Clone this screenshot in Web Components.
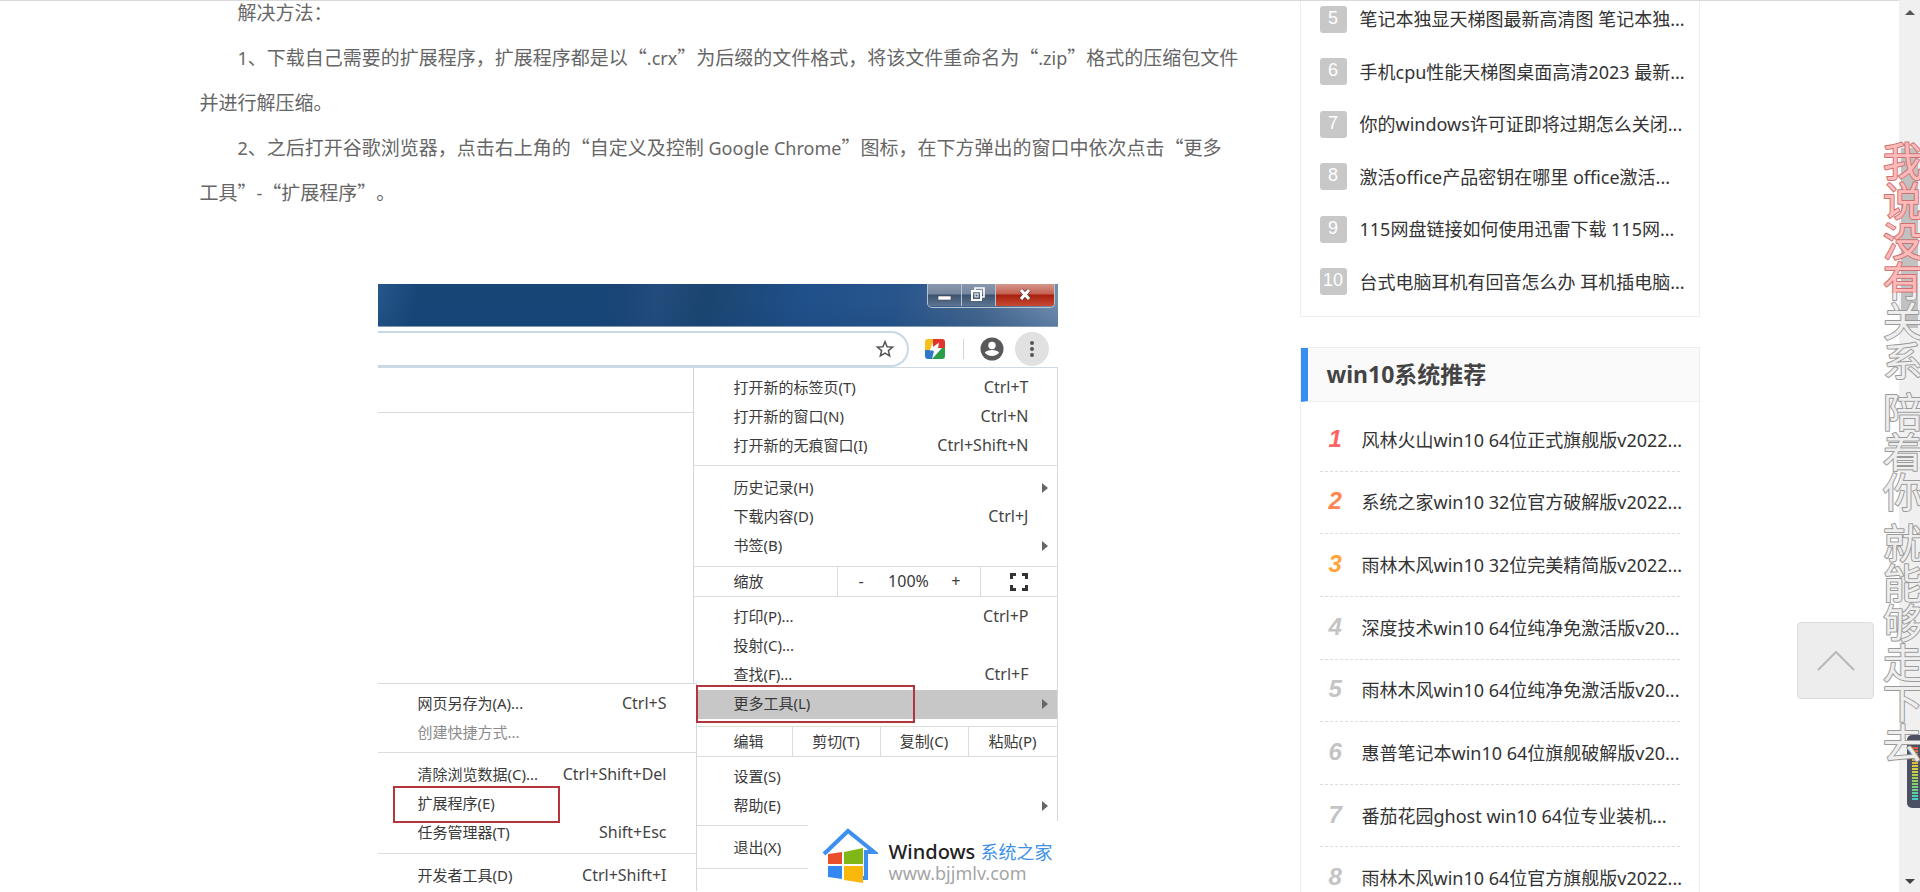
<!DOCTYPE html>
<html lang="zh-CN">
<head>
<meta charset="utf-8">
<title>win10系统推荐</title>
<style>
html,body{margin:0;height:100%}
body{overflow:hidden;background:#fff;color:#333;font-family:"Noto Sans","Noto Sans CJK SC",sans-serif}
</style>
</head>
<body>
<app-shell>
  <article-body></article-body>
  <side-bar slot="side"></side-bar>
</app-shell>
<script>
const define=(name,html)=>{
  const t=document.createElement('template');
  t.innerHTML=html;
  customElements.define(name,class extends HTMLElement{
    constructor(){super();this.attachShadow({mode:'open'}).append(t.content.cloneNode(true));}
    connectedCallback(){
      this.shadowRoot.querySelectorAll('[data-attr]').forEach(n=>{n.textContent=this.getAttribute(n.dataset.attr)||'';});
    }
  });
};

define('menu-row',`<style>
:host{display:block}
button{all:unset;box-sizing:border-box;display:flex;align-items:center;width:100%;height:29px;padding-left:40px;padding-right:var(--key-gap,28px);padding-bottom:2px;font-size:15px;line-height:27px;color:#3a3a3a;white-space:nowrap;position:relative}
.key{margin-left:auto;font-size:16px;color:#444}
i{display:none;position:absolute;right:9px;top:9px;border:5px solid transparent;border-left:6px solid #666;border-right:0}
:host([arrow]) i{display:block}
:host([off]) button{color:#8b8b8b}
:host([active]) button{background:#c7c7c7}
</style><button type="button"><span data-attr="label"></span><span class="key" data-attr="key"></span><i></i></button>`);

define('menu-group',`<style>
:host{display:block;padding:8px 0 5px;border-bottom:1px solid #dcdcdc}
:host([tight]){padding:6px 0 4px}
:host([open]){padding-bottom:0;border-bottom:0}
</style><slot></slot>`);

define('window-titlebar',`<style>
:host{display:flex;justify-content:flex-end;align-items:flex-start;height:42px;border-bottom:1px solid #8299b5;
background:linear-gradient(to bottom,transparent 40%,rgba(20,66,116,.25)),linear-gradient(100deg,#25578a 0,#174576 6%,#174576 32%,#1b4577 36%,#234c7d 41%,#1b446f 48%,#20508a 62%,#28558c 76%,#46688f 88%,#7590b2 100%)}
div{display:flex;height:23px;margin-right:3px;border:1px solid #b9c4d2;border-top:0;border-radius:0 0 5px 5px;overflow:hidden}
button{all:unset;display:grid;place-items:center;box-sizing:border-box;width:34px;height:22px;background:linear-gradient(#8a98ad,#75869f 45%,#3c536f 50%,#5d7592);border-right:1px solid #b9c4d2}
button:last-child{width:58px;border:0;background:linear-gradient(#d4978b,#c4604f 45%,#a8200f 50%,#c74a32)}
</style><div>
<button type="button" aria-label="最小化"><svg width="16" height="16"><rect x="2" y="9" width="13" height="4" fill="#fff" stroke="#445" stroke-width=".6"/></svg></button>
<button type="button" aria-label="还原"><svg width="16" height="16" fill="none" stroke="#fff" stroke-width="1.6"><path d="M5 3V1h9v9h-2"/><rect x="2" y="4" width="9" height="9" stroke-width="2"/><rect x="5" y="7" width="3" height="3" stroke-width="1"/></svg></button>
<button type="button" aria-label="关闭"><svg width="18" height="16"><path d="M5 3l8 9M13 3l-8 9" stroke="#633" stroke-width="4.600"/><path d="M5 3l8 9M13 3l-8 9" stroke="#fff" stroke-width="3.200"/></svg></button>
</div>`);

define('browser-toolbar',`<style>
:host{display:flex;align-items:center;box-sizing:border-box;height:41px;padding-top:4px;background:#fff;border-bottom:1px solid #cfd9e0}
.omni{flex:1;height:32px;border:2px solid #c8d9e6;border-left:0;border-radius:0 18px 18px 0;display:flex;align-items:center;justify-content:flex-end;padding-right:12px}
.ext{margin-left:16px}.bar{width:1px;height:20px;background:#d5d5d5;margin-left:18px}
.me{margin-left:16px}.more{margin-left:11px;margin-right:9px}
svg{display:block}
</style><div class="omni"><svg width="20" height="20" viewBox="0 0 20 20"><path d="M10 2.600l2.100 5.100 5.500.4-4.200 3.500 1.300 5.400-4.700-2.900L5.300 17l1.300-5.400L2.400 8.100l5.500-.4z" fill="none" stroke="#555" stroke-width="1.500"/></svg></div>
<svg class="ext" width="20" height="20" viewBox="0 0 20 20"><clipPath id="c"><rect width="20" height="20" rx="3"/></clipPath><g clip-path="url(#c)"><rect width="20" height="20" fill="#fff"/><path d="M0 0H9L5 11H0z" fill="#f5c01c"/><path d="M8 0H20V9H13L14 4L8 8z" fill="#e0342c"/><path d="M0 11H8L9 13L7 20H0z" fill="#2f77c9"/><path d="M20 9V20H7L17 9z" fill="#2a9e4a"/><path d="M14 3.500L4.500 11.500h5L7.500 17.500 16.500 9h-5z" fill="#fff"/></g></svg>
<span class="bar"></span>
<svg class="me" width="24" height="24" viewBox="0 0 24 24"><circle cx="12" cy="12" r="11.500" fill="#58595b"/><circle cx="12" cy="8.500" r="3.700" fill="#fff"/><path d="M4.800 15.600c2.400-3.400 12-3.400 14.400 0-3 4.600-11.400 4.600-14.400 0z" fill="#fff"/></svg>
<svg class="more" width="34" height="34" viewBox="0 0 34 34"><circle cx="17" cy="17" r="17" fill="#e1e1e1"/><g fill="#555"><circle cx="17" cy="11" r="2"/><circle cx="17" cy="17" r="2"/><circle cx="17" cy="23" r="2"/></g></svg>`);

define('site-logo',`<style>
:host{display:flex;align-items:center;box-sizing:border-box;width:250px;height:70px;padding-left:14px;gap:11px;background:#fff}
div{padding-top:12px}
b{display:block;font-weight:500;font-size:20px;line-height:22px;color:#222;white-space:nowrap}
b span{color:#3d8fe8;font-weight:400;font-size:18px}
small{display:block;font-size:18px;line-height:20px;color:#a5a5a5}
</style><svg width="56" height="56" viewBox="0 0 56 56"><path d="M2 26L26 3l26 21H44V50H37" fill="none" stroke="#3d8ff0" stroke-width="4"/><path d="M6 26l14-2v12H6z" fill="#e8502c"/><path d="M22 24l19-4v16H22z" fill="#7fb816"/><path d="M6 38h14v13L6 49z" fill="#3489f0"/><path d="M22 38h19v17l-19-3z" fill="#fab80c"/></svg>
<div><b>Windows <span>系统之家</span></b><small>www.bjjmlv.com</small></div>`);

define('chrome-shot',`<style>
:host{display:block;position:relative;width:680px;background:#fff;overflow:hidden}
.under{display:grid;grid-template-columns:minmax(0,316px) minmax(0,1fr)}
.left{display:flex;flex-direction:column;border-right:1px solid #d5d5d9}
.strip{height:44px;border-bottom:1px solid #d9d9d9}
.blank{flex:1;min-height:270px}
.sub{border-top:1px solid #d9d9d9;border-right:1px solid #d9d9d9;background:#fff;margin-right:-4px;z-index:1;--key-gap:29px}
.menu{border-right:1px solid #d9d9d9}
.cells{display:grid;grid-template-columns:144px 143px 1fr;height:29px;border-bottom:1px solid #dcdcdc;font-size:15px;line-height:29px;color:#3a3a3a}
.cells.edit{grid-template-columns:99px 88px 88px 1fr;border-top:1px solid #dcdcdc;margin-top:7px}
.cells>*{border-right:1px solid #dcdcdc;display:flex;align-items:center;justify-content:center}
.cells>:first-child{justify-content:flex-start;padding-left:40px}
.cells>:last-child{border:0}
.zoom{gap:22px;font-size:16px}
button{all:unset}
.zoom button{width:10px;text-align:center}
.mark{position:absolute;box-sizing:border-box;border:2px solid #b2343c;z-index:2}
.m1{left:15px;top:502px;width:167px;height:37px}
.m2{left:318px;top:401px;width:219px;height:38px}
site-logo{position:absolute;right:0;bottom:0}
</style>
<window-titlebar></window-titlebar><browser-toolbar></browser-toolbar>
<div class="under">
<div class="left"><div class="strip"></div><div class="blank"></div>
<div class="sub">
<menu-group tight><menu-row label="网页另存为(A)..." key="Ctrl+S"></menu-row><menu-row off label="创建快捷方式..."></menu-row></menu-group>
<menu-group><menu-row label="清除浏览数据(C)..." key="Ctrl+Shift+Del"></menu-row><menu-row label="扩展程序(E)"></menu-row><menu-row label="任务管理器(T)" key="Shift+Esc"></menu-row></menu-group>
<menu-group open><menu-row label="开发者工具(D)" key="Ctrl+Shift+I"></menu-row></menu-group>
</div></div>
<div class="menu">
<menu-group tight><menu-row label="打开新的标签页(T)" key="Ctrl+T"></menu-row><menu-row label="打开新的窗口(N)" key="Ctrl+N"></menu-row><menu-row label="打开新的无痕窗口(I)" key="Ctrl+Shift+N"></menu-row></menu-group>
<menu-group><menu-row arrow label="历史记录(H)"></menu-row><menu-row label="下载内容(D)" key="Ctrl+J"></menu-row><menu-row arrow label="书签(B)"></menu-row></menu-group>
<div class="cells"><span>缩放</span><span class="zoom"><button type="button">-</button><span>100%</span><button type="button">+</button></span><button type="button" aria-label="全屏"><svg width="18" height="18" fill="none" stroke="#333" stroke-width="3"><path d="M1.500 6V1.500H6M12 1.500h4.500V6M16.500 12v4.500H12M6 16.500H1.500V12"/></svg></button></div>
<menu-group tight open><menu-row label="打印(P)..." key="Ctrl+P"></menu-row><menu-row label="投射(C)..."></menu-row><menu-row label="查找(F)..." key="Ctrl+F"></menu-row><menu-row active arrow label="更多工具(L)"></menu-row></menu-group>
<div class="cells edit"><span>编辑</span><button type="button">剪切(T)</button><button type="button">复制(C)</button><button type="button">粘贴(P)</button></div>
<menu-group tight><menu-row label="设置(S)"></menu-row><menu-row arrow label="帮助(E)"></menu-row></menu-group>
<menu-group><menu-row label="退出(X)"></menu-row></menu-group>
</div></div>
<span class="mark m1"></span><span class="mark m2"></span>
<site-logo></site-logo>`);

define('article-body',`<style>
:host{display:block;font-family:"Noto Sans CJK SC",sans-serif;font-size:19px;line-height:45px;color:#666;text-spacing-trim:space-all}
p{margin:0;text-indent:38px}
.en{font-family:"Noto Sans",sans-serif;font-size:18px;line-height:1}
.keep{white-space:nowrap}
figure{margin:70px 6px 0 0;display:flex;justify-content:center;font-family:"Noto Sans","Noto Sans CJK SC",sans-serif;line-height:29px}
</style>
<p>解决方法：</p>
<p><span class="en">1</span>、下载自己需要的扩展程序，扩展程序都是以“<span class="en">.crx</span>”为后缀的文件格式，将该文件重命名为“<span class="en">.zip</span>”格式的压缩包文件并进行解压缩。</p>
<p><span class="en">2</span>、之后打开谷歌浏览器，点击右上角的“自定义及控制<span class="en"> Google Chrome</span>”图标，在下方弹出的窗口中依次点击“更多<span class="keep">工具”</span><span class="en">-</span>“扩展程序”。</p>
<figure><chrome-shot></chrome-shot></figure>`);

define('hot-item',`<style>
:host{display:flex;align-items:center;gap:13px;font-size:18px;white-space:nowrap}
span{flex:none;width:27px;height:27px;border-radius:3px;background:#c8c8c8;color:#fff;text-align:center;font:18px/24px "Liberation Sans",sans-serif}
a{color:#333;text-decoration:none;padding-bottom:2px}
</style><span data-attr="rank"></span><a href="#"><slot></slot></a>`);

define('rank-item',`<style>
:host{display:flex;align-items:center;font-size:18px;white-space:nowrap;border-bottom:1px dashed #ddd;--c:#c4c4c4}
:host([rank="1"]){--c:#ff6464}:host([rank="2"]){--c:#ff8650}:host([rank="3"]){--c:#ffa53c}
span{flex:none;width:33px;padding-left:9px;color:var(--c);font:italic bold 24px/24px "Liberation Sans",sans-serif}
a{color:#333;text-decoration:none}
a,span{padding-bottom:2px}
</style><span data-attr="rank"></span><a href="#"><slot></slot></a>`);

define('side-bar',`<style>
:host{display:block}
section{border:1px solid #eee}
.hot{padding:3px 19px 8px}
.list{display:grid;grid-template-columns:minmax(0,1fr);grid-auto-rows:1fr}
.hot .list{min-height:315px}
.win{margin-top:30px}
.win .list{min-height:501px;padding:7px 19px 0}
h2{margin:0;padding-left:19px;border-left:7px solid #368ff0;border-bottom:1px solid #eee;background:#fafafa;color:#444;font-size:23px;line-height:53px}
</style>
<section class="hot"><div class="list">
<hot-item rank="5">笔记本独显天梯图最新高清图 笔记本独...</hot-item>
<hot-item rank="6">手机cpu性能天梯图桌面高清2023 最新...</hot-item>
<hot-item rank="7">你的windows许可证即将过期怎么关闭...</hot-item>
<hot-item rank="8">激活office产品密钥在哪里 office激活...</hot-item>
<hot-item rank="9">115网盘链接如何使用迅雷下载 115网...</hot-item>
<hot-item rank="10">台式电脑耳机有回音怎么办 耳机插电脑...</hot-item>
</div></section>
<section class="win"><h2>win10系统推荐</h2><div class="list">
<rank-item rank="1">风林火山win10 64位正式旗舰版v2022...</rank-item>
<rank-item rank="2">系统之家win10 32位官方破解版v2022...</rank-item>
<rank-item rank="3">雨林木风win10 32位完美精简版v2022...</rank-item>
<rank-item rank="4">深度技术win10 64位纯净免激活版v20...</rank-item>
<rank-item rank="5">雨林木风win10 64位纯净免激活版v20...</rank-item>
<rank-item rank="6">惠普笔记本win10 64位旗舰破解版v20...</rank-item>
<rank-item rank="7">番茄花园ghost win10 64位专业装机...</rank-item>
<rank-item rank="8">雨林木风win10 64位官方旗舰版v2022...</rank-item>
</div></section>`);

define('page-scrollbar',`<style>
:host{display:flex;flex-direction:column;justify-content:space-between;align-items:center;box-sizing:border-box;width:21px;padding:10px 0 8px;background:#f0f0f0;position:relative}
svg{display:block}
i{position:absolute;left:2px;top:148px;width:17px;height:180px;background:#c1c1c1}
</style><svg width="10" height="5"><path d="M0 5L5 0l5 5z" fill="#555"/></svg><i></i><svg width="10" height="5"><path d="M0 0h10L5 5z" fill="#444"/></svg>`);

define('level-meter',`<style>
:host{position:absolute;right:0;top:735px;width:13px;height:73px;border-radius:5px 0 0 5px;background:#4b5162}
i{position:absolute;left:5px;top:12px;width:6px;height:53px;background:repeating-linear-gradient(transparent 0 2px,#4b5162 2px 3px),linear-gradient(#f0503c,#e0a83c 22%,#d8d040 42%,#8fd060 65%,#3fd0c8)}
</style><i></i>`);

/* Karaoke strip: the sung part is pink, the rest grey. */
customElements.define('lyric-strip',class extends HTMLElement{
  constructor(){
    super();
    let y=44,out='';
    for(const ch of '我说没有关系 陪着你 就能够走下去'){
      if(ch===' '){y+=11;continue;}
      out+=`<text x="6" y="${y}">${ch}</text>`;
      y+=40;
    }
    this.attachShadow({mode:'open'}).innerHTML=`<style>
:host{position:absolute;right:0;top:132px;width:43px;height:650px;overflow:hidden}
svg{display:block}
text{font:40px "Noto Sans CJK SC",sans-serif;fill:url(#f);stroke:url(#s);stroke-width:2px;paint-order:stroke;stroke-linejoin:round}
</style><svg width="60" height="650"><defs>
<linearGradient id="f" gradientUnits="userSpaceOnUse" x1="0" y1="0" x2="0" y2="322"><stop offset=".5" stop-color="#ffbaba"/><stop offset=".5" stop-color="#eee"/></linearGradient>
<linearGradient id="s" gradientUnits="userSpaceOnUse" x1="0" y1="0" x2="0" y2="322"><stop offset=".5" stop-color="#cc7272"/><stop offset=".5" stop-color="#9a9a9a"/></linearGradient>
</defs>${out}</svg>`;
  }
});

define('to-top',`<style>
:host{position:absolute;right:46px;top:622px}
button{all:unset;box-sizing:border-box;display:grid;place-items:center;width:77px;height:77px;border:1px solid #dcdcdc;border-radius:4px;background:#ededed}
</style><button type="button" aria-label="返回顶部"><svg width="38" height="20" fill="none" stroke="#b8b8b8" stroke-width="2"><path d="M1 19L19 1l18 18"/></svg></button>`);

define('app-shell',`<style>
:host{display:flex;height:100vh;position:relative;overflow:hidden}
.view{flex:1;min-width:0;overflow:hidden;box-sizing:border-box;border-top:1px solid #d9d9d9}
main{max-width:1500px;margin:-12px auto 0;display:grid;grid-template-columns:minmax(0,1fr) 400px;gap:58px;align-items:start}
</style><div class="view"><main><slot></slot><slot name="side"></slot></main></div>
<page-scrollbar></page-scrollbar><to-top></to-top><level-meter></level-meter><lyric-strip></lyric-strip>`);
</script>
</body>
</html>
